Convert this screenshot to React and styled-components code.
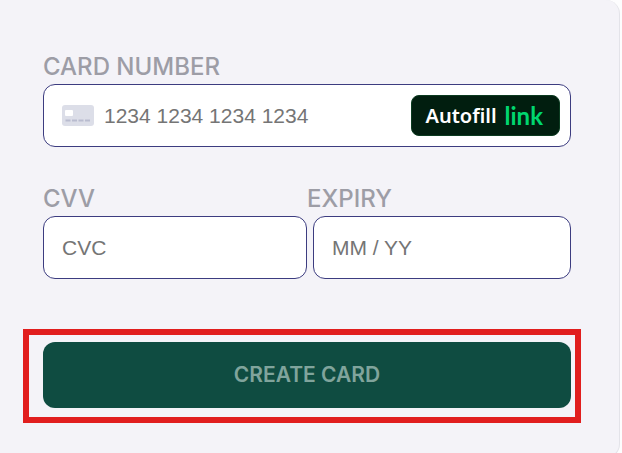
import React from 'react'
import styled, { createGlobalStyle } from 'styled-components'

const GlobalStyle = createGlobalStyle`
  * {
    box-sizing: border-box;
  }
  body {
    margin: 0;
    overflow: hidden;
    background-color: #fdfdfe;
  }
`

const Panel = styled.form`
  margin-right: 2px;
  padding: 50px 48px 34px 43px;
  border-right: 1px solid #e3e3e9;
  border-bottom: 1px solid #e3e3e9;
  border-radius: 0 14px 14px 0;
  background-color: #f4f3f8;
`

const Row = styled.div`
  display: grid;
  grid-template-columns: repeat(2, minmax(0, 1fr));
  margin-top: 35px;
`

const Label = styled.label`
  display: block;
  color: #9d9da6;
  font: 500 24px/34px Inter, sans-serif;
`

const Field = styled.div`
  display: flex;
  align-items: center;
  height: 63px;
  margin-left: ${ ({ $inset }) => $inset ? '6px' : '0' };
  padding: 0 10px 0 18px;
  border: 1px solid #3c3c80;
  border-radius: 12px;
  background-color: #fff;
`

const Input = styled.input`
  flex: 1;
  min-width: 0;
  padding: 0;
  border: 0;
  outline: 0;
  background: none;
  color: #30313d;
  font: 400 21px/28px 'Liberation Sans', sans-serif;
  &::placeholder {
    color: #757575;
    opacity: 1;
  }
`

const CardIcon = styled.svg`
  flex: none;
  margin-right: 10px;
`

const Autofill = styled.button`
  display: flex;
  align-items: center;
  justify-content: center;
  gap: 8px;
  height: 41px;
  padding: 0 16px 0 14px;
  border: 1px solid #0b3b20;
  border-radius: 8px;
  background-color: #011e0f;
  color: #fff;
  font: 600 20px/28px 'Noto Sans', sans-serif;
`

const LinkName = styled.span`
  color: #00d66f;
  font: 700 24px/28px Lato, sans-serif;
`

const Highlight = styled.div`
  margin: 50px -10px 0 -20px;
  padding: 7px 4px 9px 14px;
  border: 6px solid #e11e1e;
`

const Submit = styled.button`
  display: block;
  width: 100%;
  height: 66px;
  border: 0;
  border-radius: 12px;
  background-color: #0f4c41;
  color: #80a49c;
  font: 600 21px/28px Inter, sans-serif;
`

const Card = () => (
  <CardIcon width='32' height='22' viewBox='0 0 32 22' aria-hidden='true'>
    <rect width='32' height='21' rx='3' fill='#dcdee8' />
    <rect x='3' y='5' width='8' height='6' rx='1' fill='#fff' />
    <path d='M3.500 15.500h5M10 15.500h5M16.500 15.500h5M23 15.500h5' stroke='#b9bccf' strokeWidth='2' />
  </CardIcon>
)

export default () => (
  <>
    <GlobalStyle />
    <Panel onSubmit={ e => e.preventDefault() }>
      <Label htmlFor='number'>CARD NUMBER</Label>
      <Field>
        <Card />
        <Input id='number' inputMode='numeric' placeholder='1234 1234 1234 1234' />
        <Autofill type='button'>
          Autofill
          <LinkName>link</LinkName>
        </Autofill>
      </Field>
      <Row>
        <div>
          <Label htmlFor='cvv'>CVV</Label>
          <Field>
            <Input id='cvv' inputMode='numeric' placeholder='CVC' />
          </Field>
        </div>
        <div>
          <Label htmlFor='expiry'>EXPIRY</Label>
          <Field $inset>
            <Input id='expiry' inputMode='numeric' placeholder='MM / YY' />
          </Field>
        </div>
      </Row>
      <Highlight>
        <Submit type='submit'>CREATE CARD</Submit>
      </Highlight>
    </Panel>
  </>
)
